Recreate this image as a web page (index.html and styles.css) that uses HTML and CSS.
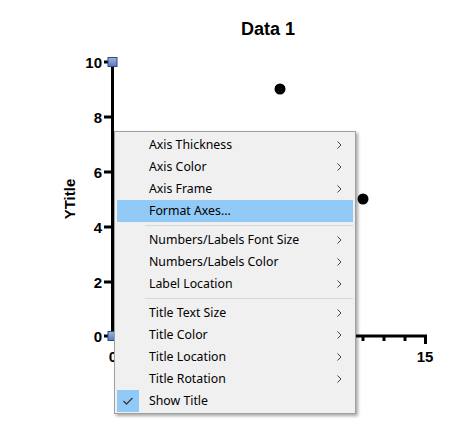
FILE: index.html
```html
<!DOCTYPE html>
<html>
<head>
<meta charset="utf-8">
<link rel="stylesheet" href="styles.css">
</head>
<body>
<div class="stage">
  <svg class="chart" width="456" height="441" viewBox="0 0 456 441">
    <defs>
      <linearGradient id="sq" x1="0" y1="0" x2="0" y2="1">
        <stop offset="0" stop-color="#9fb5e0"/>
        <stop offset="1" stop-color="#5a78bd"/>
      </linearGradient>
    </defs>
    <text class="title" x="268" y="35" text-anchor="middle">Data 1</text>
    <text class="axis-title" transform="translate(75 199) rotate(-90)" text-anchor="middle">YTitle</text>
    <g class="ticks">
      <line x1="104" y1="62" x2="112" y2="62"/>
      <line x1="104" y1="117" x2="112" y2="117"/>
      <line x1="104" y1="172" x2="112" y2="172"/>
      <line x1="104" y1="227" x2="112" y2="227"/>
      <line x1="104" y1="282" x2="112" y2="282"/>
      <line x1="104" y1="336" x2="112" y2="336"/>
      <line x1="112.5" y1="62" x2="112.5" y2="337.5"/>
      <line x1="111" y1="336" x2="427" y2="336"/>
      <line x1="134" y1="336" x2="134" y2="341"/>
      <line x1="155" y1="336" x2="155" y2="341"/>
      <line x1="176" y1="336" x2="176" y2="341"/>
      <line x1="196" y1="336" x2="196" y2="341"/>
      <line x1="217" y1="336" x2="217" y2="344"/>
      <line x1="363" y1="336" x2="363" y2="341"/>
      <line x1="384" y1="336" x2="384" y2="341"/>
      <line x1="405" y1="336" x2="405" y2="341"/>
      <line x1="425.5" y1="336" x2="425.5" y2="344"/>
    </g>
    <g class="labels">
      <text x="102" y="67.5" text-anchor="end">10</text>
      <text x="102" y="122.5" text-anchor="end">8</text>
      <text x="102" y="177.5" text-anchor="end">6</text>
      <text x="102" y="232.5" text-anchor="end">4</text>
      <text x="102" y="287.5" text-anchor="end">2</text>
      <text x="102" y="341.5" text-anchor="end">0</text>
      <text x="113" y="362" text-anchor="middle">0</text>
      <text x="425" y="362" text-anchor="middle">15</text>
    </g>
    <rect x="108" y="57.5" width="9" height="9" fill="url(#sq)" stroke="#2c4a8c" stroke-width="1"/>
    <rect x="108" y="331.5" width="9" height="9" fill="url(#sq)" stroke="#2c4a8c" stroke-width="1"/>
    <circle cx="280" cy="89" r="5.5" fill="#000"/>
    <circle cx="363" cy="199" r="5.5" fill="#000"/>
  </svg>

  <div class="menu">
    <div class="item"><span class="check"></span><span class="label">Axis Thickness</span><svg class="arrow" width="5" height="8" viewBox="0 0 5 8"><polyline points="0.5,0.5 4,4 0.5,7.5"/></svg></div>
    <div class="item"><span class="check"></span><span class="label">Axis Color</span><svg class="arrow" width="5" height="8" viewBox="0 0 5 8"><polyline points="0.5,0.5 4,4 0.5,7.5"/></svg></div>
    <div class="item"><span class="check"></span><span class="label">Axis Frame</span><svg class="arrow" width="5" height="8" viewBox="0 0 5 8"><polyline points="0.5,0.5 4,4 0.5,7.5"/></svg></div>
    <div class="item active"><span class="check"></span><span class="label">Format Axes...</span></div>
    <div class="sep"></div>
    <div class="item"><span class="check"></span><span class="label">Numbers/Labels Font Size</span><svg class="arrow" width="5" height="8" viewBox="0 0 5 8"><polyline points="0.5,0.5 4,4 0.5,7.5"/></svg></div>
    <div class="item"><span class="check"></span><span class="label">Numbers/Labels Color</span><svg class="arrow" width="5" height="8" viewBox="0 0 5 8"><polyline points="0.5,0.5 4,4 0.5,7.5"/></svg></div>
    <div class="item"><span class="check"></span><span class="label">Label Location</span><svg class="arrow" width="5" height="8" viewBox="0 0 5 8"><polyline points="0.5,0.5 4,4 0.5,7.5"/></svg></div>
    <div class="sep"></div>
    <div class="item"><span class="check"></span><span class="label">Title Text Size</span><svg class="arrow" width="5" height="8" viewBox="0 0 5 8"><polyline points="0.5,0.5 4,4 0.5,7.5"/></svg></div>
    <div class="item"><span class="check"></span><span class="label">Title Color</span><svg class="arrow" width="5" height="8" viewBox="0 0 5 8"><polyline points="0.5,0.5 4,4 0.5,7.5"/></svg></div>
    <div class="item"><span class="check"></span><span class="label">Title Location</span><svg class="arrow" width="5" height="8" viewBox="0 0 5 8"><polyline points="0.5,0.5 4,4 0.5,7.5"/></svg></div>
    <div class="item"><span class="check"></span><span class="label">Title Rotation</span><svg class="arrow" width="5" height="8" viewBox="0 0 5 8"><polyline points="0.5,0.5 4,4 0.5,7.5"/></svg></div>
    <div class="item"><span class="check checked"><svg width="10" height="8" viewBox="0 0 10 8"><polyline points="0.5,4 3.5,7 9.5,1"/></svg></span><span class="label">Show Title</span></div>
  </div>
</div>
</body>
</html>
```

FILE: styles.css
```css
html, body {
  margin: 0;
  padding: 0;
  background: #fff;
}
.stage {
  position: relative;
  width: 456px;
  height: 441px;
  overflow: hidden;
}
.chart {
  display: block;
}
.chart text {
  font-family: "Liberation Sans", Arial, sans-serif;
  font-weight: bold;
  fill: #000;
}
.chart .title {
  font-size: 18px;
}
.chart .axis-title {
  font-size: 15px;
}
.chart .labels text {
  font-size: 15px;
}
.ticks line {
  stroke: #000;
  stroke-width: 3;
}
.menu {
  position: absolute;
  left: 114px;
  top: 131px;
  width: 236px;
  padding: 2px 2px 1px 2px;
  background: #f0f0f0;
  border: 1px solid #a0a0a0;
  box-shadow: 2px 2px 3px rgba(0, 0, 0, 0.35);
  font-family: "Noto Sans", "Noto Sans CJK SC", sans-serif;
  font-size: 12.3px;
  color: #000;
}
.item {
  display: flex;
  align-items: center;
  height: 22px;
}
.item.active {
  background: #91c9f7;
}
.check {
  width: 22px;
  height: 22px;
  flex: none;
  display: flex;
  align-items: center;
  justify-content: center;
}
.check.checked {
  background: #91c9f7;
}
.check svg polyline {
  fill: none;
  stroke: #3c3c3c;
  stroke-width: 1.3;
}
.label {
  flex: 1;
  padding-left: 10px;
  line-height: 22px;
  white-space: nowrap;
}
.arrow {
  flex: none;
  margin-right: 11px;
}
.arrow polyline {
  fill: none;
  stroke: #444;
  stroke-width: 1;
}
.sep {
  height: 1px;
  background: #d7d7d7;
  margin: 3px 0 3px 28px;
}
```
